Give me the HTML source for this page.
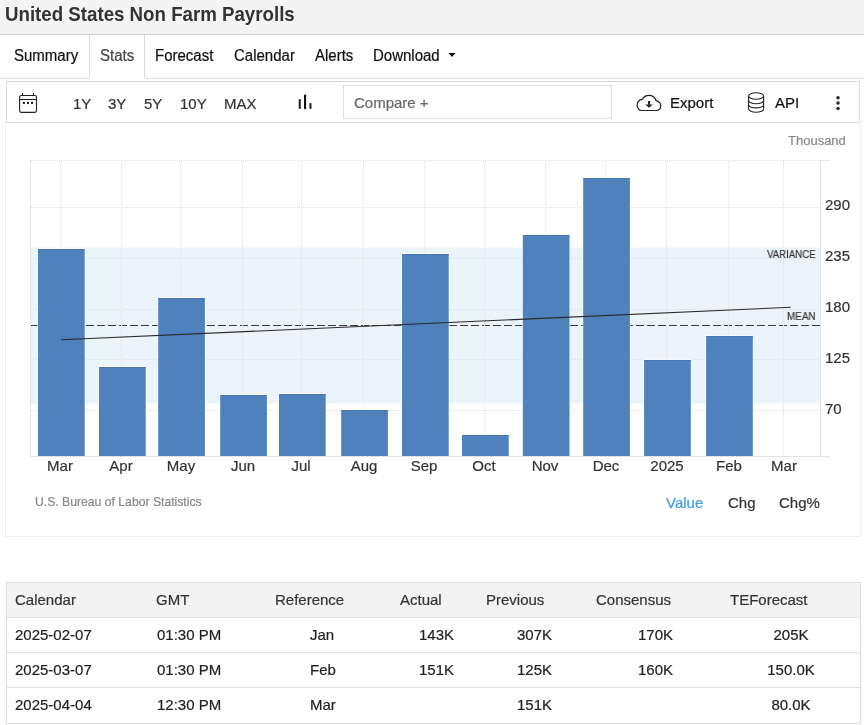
<!DOCTYPE html>
<html><head><meta charset="utf-8"><style>
html,body{margin:0;padding:0;background:#fff;width:864px;height:725px;overflow:hidden;position:relative;font-family:"Liberation Sans",sans-serif;}
.t{position:absolute;line-height:1;white-space:nowrap;-webkit-font-smoothing:antialiased;will-change:transform;-webkit-text-stroke:0.2px currentColor;}
.abs{position:absolute;box-sizing:border-box;}
</style></head><body>
<div class="abs" style="left:0;top:0;width:864px;height:35px;background:#f4f4f4;border-bottom:1px solid #cfcfcf;"></div>
<div class="abs" style="left:-10px;top:35px;width:100px;height:44px;border-right:1px solid #dcdcdc;border-bottom:1px solid #dcdcdc;border-bottom-right-radius:2px;"></div>
<div class="abs" style="left:144px;top:35px;width:730px;height:44px;border-left:1px solid #dcdcdc;border-bottom:1px solid #dcdcdc;border-bottom-left-radius:2px;"></div>
<div class="abs" style="left:6px;top:81px;width:854px;height:42px;border:1px solid #dadada;"></div>
<div class="abs" style="left:343px;top:85px;width:269px;height:34px;border:1px solid #e0e0d6;"></div>
<div class="abs" style="left:5px;top:122px;width:856px;height:415px;border:1px solid #eeeeee;border-top:none;"></div>
<div class="abs" style="left:6px;top:582px;width:855px;height:142px;border:1px solid #dcdcdc;"></div>
<div class="abs" style="left:7px;top:583px;width:853px;height:35px;background:#f3f3f3;"></div>
<div class="abs" style="left:7px;top:617px;width:853px;height:1px;background:#dde1e6;"></div>
<div class="abs" style="left:7px;top:652px;width:853px;height:1px;background:#dde1e6;"></div>
<div class="abs" style="left:7px;top:687px;width:853px;height:1px;background:#dde1e6;"></div>
<svg class="abs" style="left:0;top:0" width="864" height="725" viewBox="0 0 864 725">
<rect x="31" y="247.5" width="789" height="156" fill="#ecf4fb"/><line x1="31" y1="325.5" x2="820" y2="325.5" stroke="#353a3e" stroke-width="1.05" stroke-dasharray="8 3"/><line x1="31" y1="160.5" x2="830" y2="160.5" stroke="#e0e0e0" stroke-width="1" stroke-dasharray="1 1"/><line x1="31" y1="207.5" x2="820" y2="207.5" stroke="#e0e0e0" stroke-width="1" stroke-dasharray="1 1"/><line x1="31" y1="258.5" x2="820" y2="258.5" stroke="#e0e0e0" stroke-width="1" stroke-dasharray="1 1"/><line x1="31" y1="309.5" x2="820" y2="309.5" stroke="#e0e0e0" stroke-width="1" stroke-dasharray="1 1"/><line x1="31" y1="359.5" x2="820" y2="359.5" stroke="#e0e0e0" stroke-width="1" stroke-dasharray="1 1"/><line x1="31" y1="410.5" x2="820" y2="410.5" stroke="#e0e0e0" stroke-width="1" stroke-dasharray="1 1"/><line x1="60.5" y1="161" x2="60.5" y2="456" stroke="#e0e0e0" stroke-width="1" stroke-dasharray="1 1"/><line x1="121.5" y1="161" x2="121.5" y2="456" stroke="#e0e0e0" stroke-width="1" stroke-dasharray="1 1"/><line x1="180.5" y1="161" x2="180.5" y2="456" stroke="#e0e0e0" stroke-width="1" stroke-dasharray="1 1"/><line x1="242.5" y1="161" x2="242.5" y2="456" stroke="#e0e0e0" stroke-width="1" stroke-dasharray="1 1"/><line x1="301.5" y1="161" x2="301.5" y2="456" stroke="#e0e0e0" stroke-width="1" stroke-dasharray="1 1"/><line x1="363.5" y1="161" x2="363.5" y2="456" stroke="#e0e0e0" stroke-width="1" stroke-dasharray="1 1"/><line x1="424.5" y1="161" x2="424.5" y2="456" stroke="#e0e0e0" stroke-width="1" stroke-dasharray="1 1"/><line x1="484.5" y1="161" x2="484.5" y2="456" stroke="#e0e0e0" stroke-width="1" stroke-dasharray="1 1"/><line x1="545.5" y1="161" x2="545.5" y2="456" stroke="#e0e0e0" stroke-width="1" stroke-dasharray="1 1"/><line x1="605.5" y1="161" x2="605.5" y2="456" stroke="#e0e0e0" stroke-width="1" stroke-dasharray="1 1"/><line x1="666.5" y1="161" x2="666.5" y2="456" stroke="#e0e0e0" stroke-width="1" stroke-dasharray="1 1"/><line x1="728.5" y1="161" x2="728.5" y2="456" stroke="#e0e0e0" stroke-width="1" stroke-dasharray="1 1"/><line x1="783.5" y1="161" x2="783.5" y2="456" stroke="#e0e0e0" stroke-width="1" stroke-dasharray="1 1"/><line x1="820" y1="160.5" x2="830" y2="160.5" stroke="#e6e6e6"/><line x1="30.5" y1="160" x2="30.5" y2="457" stroke="#e2e2e2"/><line x1="820.5" y1="160" x2="820.5" y2="457" stroke="#e2e2e2"/><line x1="30" y1="456.5" x2="830" y2="456.5" stroke="#e2e2e2"/><rect x="37.4" y="248.4" width="47.900000000000006" height="207.6" fill="#fff"/><rect x="38.0" y="249" width="46.7" height="207" fill="#4f81bd"/><rect x="38.0" y="249" width="46.7" height="1" fill="#4776b4"/><rect x="98.4" y="366.4" width="47.900000000000006" height="89.6" fill="#fff"/><rect x="99.0" y="367" width="46.7" height="89" fill="#4f81bd"/><rect x="99.0" y="367" width="46.7" height="1" fill="#4776b4"/><rect x="157.6" y="297.4" width="47.900000000000006" height="158.6" fill="#fff"/><rect x="158.2" y="298" width="46.7" height="158" fill="#4f81bd"/><rect x="158.2" y="298" width="46.7" height="1" fill="#4776b4"/><rect x="219.6" y="394.4" width="47.900000000000006" height="61.6" fill="#fff"/><rect x="220.2" y="395" width="46.7" height="61" fill="#4f81bd"/><rect x="220.2" y="395" width="46.7" height="1" fill="#4776b4"/><rect x="278.4" y="393.4" width="47.900000000000006" height="62.6" fill="#fff"/><rect x="279.0" y="394" width="46.7" height="62" fill="#4f81bd"/><rect x="279.0" y="394" width="46.7" height="1" fill="#4776b4"/><rect x="340.59999999999997" y="409.4" width="47.900000000000006" height="46.6" fill="#fff"/><rect x="341.2" y="410" width="46.7" height="46" fill="#4f81bd"/><rect x="341.2" y="410" width="46.7" height="1" fill="#4776b4"/><rect x="401.4" y="253.4" width="47.900000000000006" height="202.6" fill="#fff"/><rect x="402.0" y="254" width="46.7" height="202" fill="#4f81bd"/><rect x="402.0" y="254" width="46.7" height="1" fill="#4776b4"/><rect x="461.4" y="434.4" width="47.900000000000006" height="21.6" fill="#fff"/><rect x="462.0" y="435" width="46.7" height="21" fill="#4f81bd"/><rect x="462.0" y="435" width="46.7" height="1" fill="#4776b4"/><rect x="522.1999999999999" y="234.4" width="47.900000000000006" height="221.6" fill="#fff"/><rect x="522.8" y="235" width="46.7" height="221" fill="#4f81bd"/><rect x="522.8" y="235" width="46.7" height="1" fill="#4776b4"/><rect x="582.6" y="177.4" width="47.900000000000006" height="278.6" fill="#fff"/><rect x="583.2" y="178" width="46.7" height="278" fill="#4f81bd"/><rect x="583.2" y="178" width="46.7" height="1" fill="#4776b4"/><rect x="643.5" y="359.4" width="47.900000000000006" height="96.6" fill="#fff"/><rect x="644.1" y="360" width="46.7" height="96" fill="#4f81bd"/><rect x="644.1" y="360" width="46.7" height="1" fill="#4776b4"/><rect x="705.5" y="335.4" width="47.900000000000006" height="120.6" fill="#fff"/><rect x="706.1" y="336" width="46.7" height="120" fill="#4f81bd"/><rect x="706.1" y="336" width="46.7" height="1" fill="#4776b4"/><line x1="61" y1="339.8" x2="790.7" y2="307.3" stroke="#2a2a2a" stroke-width="1.05"/>
<rect x="19.6" y="95.5" width="16.9" height="16.9" rx="1.6" fill="none" stroke="#222" stroke-width="1.1"/><line x1="19.6" y1="99.5" x2="36.5" y2="99.5" stroke="#222" stroke-width="1.1"/><line x1="22.5" y1="93" x2="22.5" y2="95.5" stroke="#222" stroke-width="1.1"/><line x1="33.4" y1="93" x2="33.4" y2="95.5" stroke="#222" stroke-width="1.1"/><rect x="22.9" y="101.9" width="2" height="2" fill="#111"/><rect x="27.0" y="101.9" width="2" height="2" fill="#111"/><rect x="31.0" y="101.9" width="2" height="2" fill="#111"/><rect x="298.7" y="99.1" width="2.1" height="10" rx="0.8" fill="#222"/><rect x="304.0" y="94.5" width="2.1" height="14.7" rx="0.8" fill="#111"/><rect x="309.4" y="103" width="2.1" height="6.1" rx="0.8" fill="#222"/><g transform="translate(636,94)"><path d="M5.6 16.5 C2.7 16.5 1.2 13.9 1.2 11.3 C1.2 8.2 3.5 5.7 6.5 5.2 A7.35 7.35 0 0 1 20 6.6 C23 7.3 24.8 9.6 24.8 12.1 C24.8 14.6 22.8 16.5 20.4 16.5 Z" fill="none" stroke="#222" stroke-width="1.2"/><rect x="12" y="7" width="2.1" height="3.8" fill="#222"/><path d="M9.2 10.4 L16.9 10.4 L13.05 13.8 Z" fill="#222"/></g><g fill="none" stroke="#222" stroke-width="1.1"><ellipse cx="756.1" cy="96" rx="7.5" ry="3.2"/><path d="M748.6 96 V109.1 A7.5 3.2 0 0 0 763.6 109.1 V96"/><path d="M748.6 100.6 A7.5 3.2 0 0 0 763.6 100.6"/><path d="M748.6 104.7 A7.5 3.2 0 0 0 763.6 104.7"/></g><circle cx="838" cy="97.8" r="1.75" fill="#2a2a2a"/><circle cx="838" cy="103.1" r="1.75" fill="#2a2a2a"/><circle cx="838" cy="108.5" r="1.75" fill="#2a2a2a"/><path d="M448.4 53 L455.6 53 L452 56.9 Z" fill="#111"/>
</svg>
<div class="t" style="left:5.00px;top:5.97px;font-size:18.7px;color:#333;font-weight:700;transform-origin:0 15.83px;transform:scale(1.0,1.06);-webkit-text-stroke:0;">United States Non Farm Payrolls</div><div class="t" style="left:14.10px;top:47.60px;font-size:15px;color:#111;font-weight:400;transform-origin:0 12.70px;transform:scale(1.0,1.04);">Summary</div><div class="t" style="left:99.50px;top:47.60px;font-size:15px;color:#444;font-weight:400;transform-origin:0 12.70px;transform:scale(1.0,1.04);">Stats</div><div class="t" style="left:155.10px;top:47.60px;font-size:15px;color:#111;font-weight:400;transform-origin:0 12.70px;transform:scale(1.0,1.04);">Forecast</div><div class="t" style="left:233.50px;top:47.60px;font-size:15px;color:#111;font-weight:400;transform-origin:0 12.70px;transform:scale(1.0,1.04);">Calendar</div><div class="t" style="left:314.70px;top:47.60px;font-size:15px;color:#111;font-weight:400;transform-origin:0 12.70px;transform:scale(1.0,1.04);">Alerts</div><div class="t" style="left:373.20px;top:47.60px;font-size:15px;color:#111;font-weight:400;transform-origin:0 12.70px;transform:scale(1.0,1.04);">Download</div><div class="t" style="left:73.00px;top:96.05px;font-size:15px;color:#333;font-weight:400;">1Y</div><div class="t" style="left:108.00px;top:96.05px;font-size:15px;color:#333;font-weight:400;">3Y</div><div class="t" style="left:143.80px;top:96.05px;font-size:15px;color:#333;font-weight:400;">5Y</div><div class="t" style="left:180.00px;top:96.05px;font-size:15px;color:#333;font-weight:400;">10Y</div><div class="t" style="left:224.00px;top:96.05px;font-size:15px;color:#333;font-weight:400;">MAX</div><div class="t" style="left:353.50px;top:95.05px;font-size:15px;color:#666;font-weight:400;">Compare +</div><div class="t" style="left:669.60px;top:95.30px;font-size:15px;color:#111;font-weight:400;">Export</div><div class="t" style="left:775.00px;top:94.90px;font-size:15px;color:#111;font-weight:400;">API</div><div class="t" style="left:787.50px;top:133.90px;font-size:13px;color:#888;font-weight:400;">Thousand</div><div class="t" style="left:824.60px;top:197.20px;font-size:15px;color:#333;font-weight:400;">290</div><div class="t" style="left:824.60px;top:247.70px;font-size:15px;color:#333;font-weight:400;">235</div><div class="t" style="left:824.60px;top:299.10px;font-size:15px;color:#333;font-weight:400;">180</div><div class="t" style="left:824.60px;top:349.80px;font-size:15px;color:#333;font-weight:400;">125</div><div class="t" style="left:824.60px;top:400.50px;font-size:15px;color:#333;font-weight:400;">70</div><div class="t" style="left:766.80px;top:249.03px;font-size:10.6px;color:#333;font-weight:400;transform-origin:0 8.97px;transform:scale(0.91,1.0);">VARIANCE</div><div class="t" style="left:787.40px;top:311.03px;font-size:10.6px;color:#333;font-weight:400;transform-origin:0 8.97px;transform:scale(0.93,1.0);">MEAN</div><div class="t" style="left:-139.55px;width:400px;text-align:center;top:457.70px;font-size:15px;color:#333;font-weight:400;">Mar</div><div class="t" style="left:-78.55px;width:400px;text-align:center;top:457.70px;font-size:15px;color:#333;font-weight:400;">Apr</div><div class="t" style="left:-19.35px;width:400px;text-align:center;top:457.70px;font-size:15px;color:#333;font-weight:400;">May</div><div class="t" style="left:42.65px;width:400px;text-align:center;top:457.70px;font-size:15px;color:#333;font-weight:400;">Jun</div><div class="t" style="left:101.45px;width:400px;text-align:center;top:457.70px;font-size:15px;color:#333;font-weight:400;">Jul</div><div class="t" style="left:163.65px;width:400px;text-align:center;top:457.70px;font-size:15px;color:#333;font-weight:400;">Aug</div><div class="t" style="left:224.45px;width:400px;text-align:center;top:457.70px;font-size:15px;color:#333;font-weight:400;">Sep</div><div class="t" style="left:284.45px;width:400px;text-align:center;top:457.70px;font-size:15px;color:#333;font-weight:400;">Oct</div><div class="t" style="left:345.25px;width:400px;text-align:center;top:457.70px;font-size:15px;color:#333;font-weight:400;">Nov</div><div class="t" style="left:405.65px;width:400px;text-align:center;top:457.70px;font-size:15px;color:#333;font-weight:400;">Dec</div><div class="t" style="left:466.55px;width:400px;text-align:center;top:457.70px;font-size:15px;color:#333;font-weight:400;">2025</div><div class="t" style="left:528.55px;width:400px;text-align:center;top:457.70px;font-size:15px;color:#333;font-weight:400;">Feb</div><div class="t" style="left:583.80px;width:400px;text-align:center;top:457.70px;font-size:15px;color:#333;font-weight:400;">Mar</div><div class="t" style="left:35.20px;top:496.37px;font-size:12.2px;color:#888;font-weight:400;">U.S. Bureau of Labor Statistics</div><div class="t" style="left:665.60px;top:495.10px;font-size:15px;color:#3d9be9;font-weight:400;">Value</div><div class="t" style="left:728.20px;top:495.10px;font-size:15px;color:#333;font-weight:400;">Chg</div><div class="t" style="left:779.30px;top:495.10px;font-size:15px;color:#333;font-weight:400;">Chg%</div><div class="t" style="left:15.30px;top:592.40px;font-size:15px;color:#333;font-weight:400;">Calendar</div><div class="t" style="left:156.30px;top:592.40px;font-size:15px;color:#333;font-weight:400;">GMT</div><div class="t" style="left:274.90px;top:592.40px;font-size:15px;color:#333;font-weight:400;">Reference</div><div class="t" style="left:400.00px;top:592.40px;font-size:15px;color:#333;font-weight:400;">Actual</div><div class="t" style="left:486.20px;top:592.40px;font-size:15px;color:#333;font-weight:400;">Previous</div><div class="t" style="left:595.60px;top:592.40px;font-size:15px;color:#333;font-weight:400;">Consensus</div><div class="t" style="left:730.00px;top:592.40px;font-size:15px;color:#333;font-weight:400;">TEForecast</div><div class="t" style="left:15.30px;top:627.20px;font-size:15px;color:#222;font-weight:400;">2025-02-07</div><div class="t" style="left:156.50px;top:627.20px;font-size:15px;color:#222;font-weight:400;">01:30 PM</div><div class="t" style="left:310.30px;top:627.20px;font-size:15px;color:#222;font-weight:400;">Jan</div><div class="t" style="left:53.50px;width:400px;text-align:right;top:627.20px;font-size:15px;color:#222;font-weight:400;">143K</div><div class="t" style="left:151.60px;width:400px;text-align:right;top:627.20px;font-size:15px;color:#222;font-weight:400;">307K</div><div class="t" style="left:273.40px;width:400px;text-align:right;top:627.20px;font-size:15px;color:#222;font-weight:400;">170K</div><div class="t" style="left:591.30px;width:400px;text-align:center;top:627.20px;font-size:15px;color:#222;font-weight:400;">205K</div><div class="t" style="left:15.30px;top:662.10px;font-size:15px;color:#222;font-weight:400;">2025-03-07</div><div class="t" style="left:156.50px;top:662.10px;font-size:15px;color:#222;font-weight:400;">01:30 PM</div><div class="t" style="left:310.30px;top:662.10px;font-size:15px;color:#222;font-weight:400;">Feb</div><div class="t" style="left:53.50px;width:400px;text-align:right;top:662.10px;font-size:15px;color:#222;font-weight:400;">151K</div><div class="t" style="left:151.60px;width:400px;text-align:right;top:662.10px;font-size:15px;color:#222;font-weight:400;">125K</div><div class="t" style="left:273.40px;width:400px;text-align:right;top:662.10px;font-size:15px;color:#222;font-weight:400;">160K</div><div class="t" style="left:591.30px;width:400px;text-align:center;top:662.10px;font-size:15px;color:#222;font-weight:400;">150.0K</div><div class="t" style="left:15.30px;top:697.10px;font-size:15px;color:#222;font-weight:400;">2025-04-04</div><div class="t" style="left:156.50px;top:697.10px;font-size:15px;color:#222;font-weight:400;">12:30 PM</div><div class="t" style="left:310.30px;top:697.10px;font-size:15px;color:#222;font-weight:400;">Mar</div><div class="t" style="left:151.60px;width:400px;text-align:right;top:697.10px;font-size:15px;color:#222;font-weight:400;">151K</div><div class="t" style="left:591.30px;width:400px;text-align:center;top:697.10px;font-size:15px;color:#222;font-weight:400;">80.0K</div>
</body></html>
